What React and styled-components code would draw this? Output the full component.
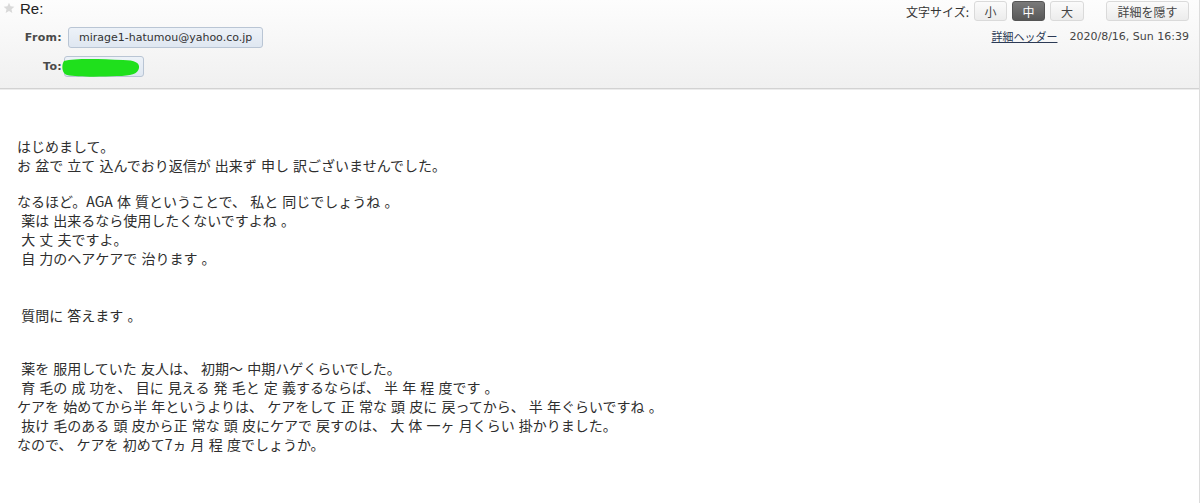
import React from 'react';
import styled, { createGlobalStyle } from 'styled-components';

const GlobalStyle = createGlobalStyle`
  html, body {
    margin: 0;
    padding: 0;
    background: #ffffff;
  }
  body {
    font-family: 'Noto Sans CJK JP', 'Noto Sans', sans-serif;
  }
`;

const Page = styled.div`
  width: 1200px;
  height: 503px;
  box-sizing: border-box;
  border-right: 1px solid #dcdcdc;
  background: #ffffff;
  overflow: hidden;
`;

const Header = styled.header`
  height: 89px;
  box-sizing: border-box;
  display: flex;
  justify-content: space-between;
  background: linear-gradient(#fdfdfd, #f0f0f0);
  border-bottom: 1px solid #d2d2d2;
  box-shadow: 0 1px 0 #ececec;
`;

const LeftCol = styled.div`
  display: flex;
  flex-direction: column;
  padding-left: 3px;
`;

const TitleRow = styled.div`
  display: flex;
  align-items: center;
  gap: 5px;
  height: 20px;
  margin-top: -2px;
`;

const Subject = styled.span`
  font-family: 'Liberation Sans', 'Noto Sans CJK JP', sans-serif;
  font-size: 15px;
  color: #222;
`;

const AddrGrid = styled.div`
  display: grid;
  grid-template-columns: 59px auto;
  column-gap: 6px;
  row-gap: 8px;
  margin-top: 9px;
  align-items: center;
`;

const Label = styled.span`
  text-align: right;
  font-family: 'DejaVu Sans', 'Liberation Sans', sans-serif;
  font-size: 11px;
  font-weight: bold;
  color: #4a4a4a;
  letter-spacing: 0.3px;
`;

const AddrBox = styled.span`
  display: inline-flex;
  align-items: center;
  height: 21px;
  box-sizing: border-box;
  padding: 0 10px;
  justify-self: start;
  background: linear-gradient(#edf2f8, #dfe7f1);
  border: 1px solid #b9c5d4;
  border-radius: 3px;
  font-family: 'DejaVu Sans', 'Liberation Sans', sans-serif;
  font-size: 11px;
  color: #333;
  margin-left: ${(p) => p.$shift || 0}px;
  width: ${(p) => (p.$w ? `${p.$w}px` : 'auto')};
  position: relative;
`;

const Redact = styled.svg`
  position: absolute;
  left: -4px;
  top: 0;
`;

const RightCol = styled.div`
  display: flex;
  flex-direction: column;
  align-items: flex-end;
  padding-right: 10px;
`;

const Controls = styled.div`
  display: flex;
  align-items: center;
  margin-top: 1px;
`;

const SizeLabel = styled.span`
  font-size: 12px;
  color: #333;
  margin-right: 5px;
`;

const Btn = styled.span`
  display: inline-flex;
  align-items: center;
  justify-content: center;
  height: 20px;
  box-sizing: border-box;
  width: ${(p) => p.$w}px;
  margin-left: ${(p) => p.$ml}px;
  border: 1px solid ${(p) => (p.$active ? '#555' : '#dadada')};
  border-radius: 3px;
  background: ${(p) =>
    p.$active ? 'linear-gradient(#7a7a7a, #585858)' : 'linear-gradient(#fbfbfb, #ececec)'};
  color: ${(p) => (p.$active ? '#fff' : '#444')};
  font-size: 12px;
`;

const MetaRow = styled.div`
  display: flex;
  align-items: center;
  gap: 12px;
  margin-top: 7px;
`;

const Link = styled.a`
  font-size: 11px;
  color: #2c3a55;
  text-decoration: underline;
`;

const DateText = styled.span`
  font-family: 'DejaVu Sans', 'Liberation Sans', sans-serif;
  font-size: 11px;
  color: #444;
`;

const Body = styled.div`
  padding: 48px 0 0 17px;
  font-size: 14px;
  line-height: 19px;
  color: #2e2e2e;
  word-spacing: 1px;
`;

const Para = styled.p`
  margin: ${(p) => p.$gap}px 0 0;
  white-space: pre;
`;

const paragraphs = [
  {
    gap: 0,
    text: `はじめまして。
お 盆で 立て 込んでおり返信が 出来ず 申し 訳ございませんでした。`,
  },
  {
    gap: 17,
    text: `なるほど。AGA 体 質ということで、 私と 同じでしょうね 。
 薬は 出来るなら使用したくないですよね 。
 大 丈 夫ですよ。
 自 力のヘアケアで 治ります 。`,
  },
  { gap: 38, text: ` 質問に 答えます 。` },
  {
    gap: 34,
    text: ` 薬を 服用していた 友人は、 初期〜 中期ハゲくらいでした。
 育 毛の 成 功を、 目に 見える 発 毛と 定 義するならば、 半 年 程 度です 。
ケアを 始めてから半 年というよりは、 ケアをして 正 常な 頭 皮に 戻ってから、 半 年ぐらいですね 。
 抜け 毛のある 頭 皮から正 常な 頭 皮にケアで 戻すのは、 大 体 一ヶ 月くらい 掛かりました。
なので、 ケアを 初めて7ヵ 月 程 度でしょうか。`,
  },
];

export default function App() {
  return (
    <Page>
      <GlobalStyle />
      <Header>
        <LeftCol>
          <TitleRow>
            <svg width="12" height="12" viewBox="0 0 24 24">
              <path
                d="M12 1.5l3.1 7.1 7.7.7-5.8 5.1 1.7 7.6L12 18l-6.7 4 1.7-7.6-5.8-5.1 7.7-.7z"
                fill="#d9d9d9"
              />
            </svg>
            <Subject>Re:</Subject>
          </TitleRow>
          <AddrGrid>
            <Label>From:</Label>
            <AddrBox>mirage1-hatumou@yahoo.co.jp</AddrBox>
            <Label>To:</Label>
            <AddrBox $w={80} $shift={-4}>
              <Redact width="80" height="21" viewBox="0 0 80 21">
                <path
                  d="M3 4 C14 1, 40 2, 62 3 C74 3, 79 6, 78 11 C77 17, 70 19, 56 19 C38 20, 16 20, 6 18 C1 17, 0 8, 3 4 Z"
                  fill="#1fe01c"
                />
              </Redact>
            </AddrBox>
          </AddrGrid>
        </LeftCol>
        <RightCol>
          <Controls>
            <SizeLabel>文字サイズ:</SizeLabel>
            <Btn $w={33} $ml={0}>小</Btn>
            <Btn $w={33} $ml={5} $active>中</Btn>
            <Btn $w={34} $ml={5}>大</Btn>
            <Btn $w={83} $ml={22}>詳細を隠す</Btn>
          </Controls>
          <MetaRow>
            <Link>詳細ヘッダー</Link>
            <DateText>2020/8/16, Sun 16:39</DateText>
          </MetaRow>
        </RightCol>
      </Header>
      <Body>
        {paragraphs.map((p, i) => (
          <Para key={i} $gap={p.gap}>
            {p.text}
          </Para>
        ))}
      </Body>
    </Page>
  );
}
